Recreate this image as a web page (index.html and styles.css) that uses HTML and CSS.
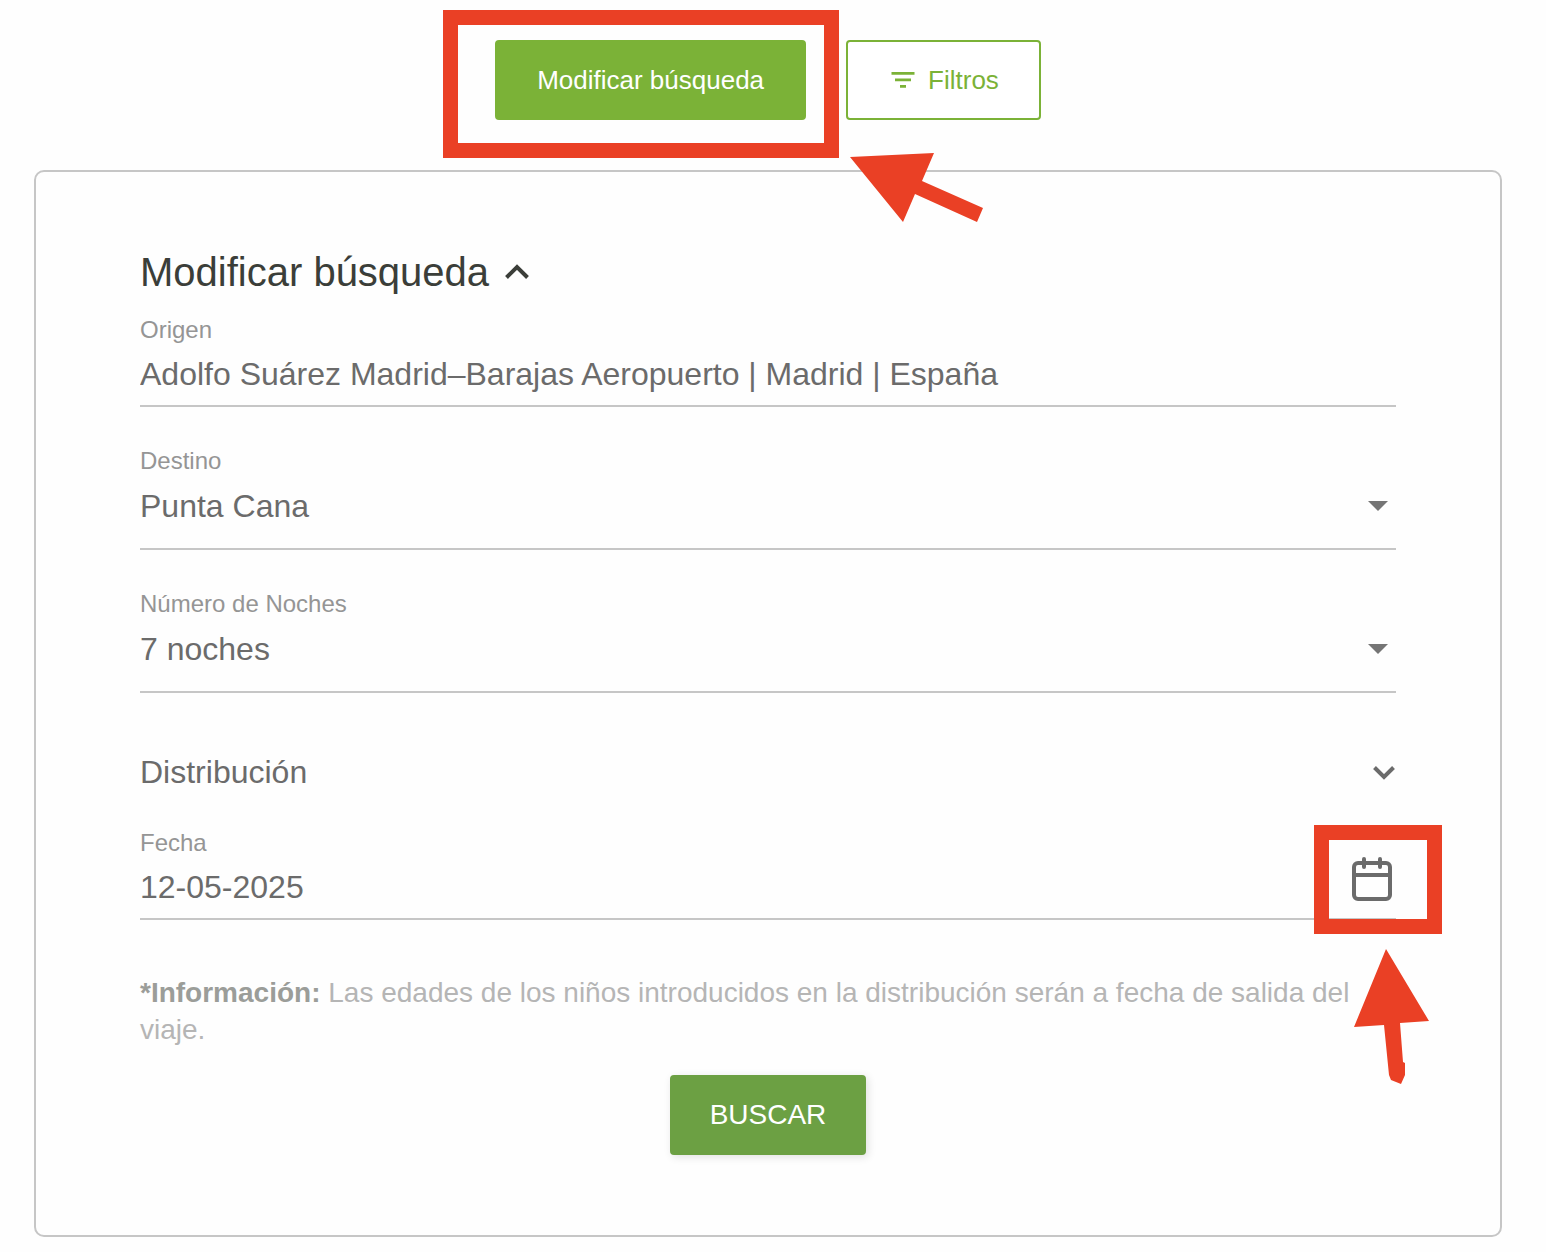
FILE: index.html
```
<!DOCTYPE html>
<html lang="es">

<head>
    <meta charset="UTF-8">
    <meta name="viewport" content="width=device-width, initial-scale=1.0">
    <title>Modificar búsqueda</title>
    <link rel="stylesheet" href="styles.css">
</head>

<body>
    <div class="toolbar">
        <div class="highlighted">
            <button type="button" class="btn btn-primary">Modificar búsqueda</button>
            <div class="mark mark-button"></div>
            <svg class="arrow arrow-button" viewBox="0 0 134 70" aria-hidden="true">
                <path d="M0 4L84 0L72 28L133 55L127 69L65 41L53 69Z" />
            </svg>
        </div>
        <button type="button" class="btn btn-outline">
            <svg width="28" height="28" viewBox="0 0 28 28" fill="currentColor" aria-hidden="true">
                <path d="M3.5 6h23v2.7h-23zM7 12.6h16v2.7H7zM12 19.1h6v2.6h-6z" />
            </svg>
            Filtros
        </button>
    </div>

    <form class="search-card">
        <button type="button" class="title">
            Modificar búsqueda
            <svg width="24" height="16" viewBox="0 0 24 16" aria-hidden="true">
                <path d="M1.5 13.5L12 3L22.5 13.5" fill="none" stroke="currentColor" stroke-width="4" />
            </svg>
        </button>

        <div class="field">
            <label for="origen">Origen</label>
            <input type="text" id="origen" name="origen" value="Adolfo Suárez Madrid–Barajas Aeropuerto | Madrid | España">
        </div>

        <div class="field">
            <label for="destino">Destino</label>
            <div class="control">
                <select id="destino" name="destino">
                    <option>Punta Cana</option>
                </select>
                <svg class="caret" viewBox="0 0 20 10" aria-hidden="true">
                    <path d="M0 0h20L10 10z" />
                </svg>
            </div>
        </div>

        <div class="field">
            <label for="noches">Número de Noches</label>
            <div class="control">
                <select id="noches" name="noches">
                    <option>7 noches</option>
                </select>
                <svg class="caret" viewBox="0 0 20 10" aria-hidden="true">
                    <path d="M0 0h20L10 10z" />
                </svg>
            </div>
        </div>

        <button type="button" class="distribution">
            Distribución
            <svg width="24" height="16" viewBox="0 0 24 16" aria-hidden="true">
                <path d="M2.5 3.5L12 13L21.5 3.5" fill="none" stroke="currentColor" stroke-width="4" />
            </svg>
        </button>

        <div class="field field-date">
            <label for="fecha">Fecha</label>
            <div class="control">
                <input type="text" id="fecha" name="fecha" value="12-05-2025">
                <button type="button" class="calendar" aria-label="Abrir calendario">
                    <svg width="40" height="44" viewBox="0 0 40 44" fill="none" stroke="currentColor" stroke-width="4" aria-hidden="true">
                        <rect x="2" y="6" width="36" height="36" rx="4" />
                        <path d="M2 18h36" />
                        <path d="M12 2v8M28 2v8" stroke-linecap="round" />
                    </svg>
                </button>
                <div class="mark mark-calendar"></div>
                <svg class="arrow arrow-calendar" viewBox="0 0 76 136" aria-hidden="true">
                    <path d="M32 0L75 72L46 74L49 113L51 114L51 126L47 135L37 131L35 126L30 76L0 78Z" />
                </svg>
            </div>
        </div>

        <p class="info"><strong>*Información:</strong> Las edades de los niños introducidos en la distribución serán a fecha de salida del viaje.</p>

        <button type="submit" class="btn btn-submit">BUSCAR</button>
    </form>
</body>

</html>
```

FILE: styles.css
```
* {
    box-sizing: border-box;
}

body {
    margin: 0;
    padding: 40px 44px 15px 34px;
    background-color: #fefefe;
    color: #6b6b6b;
    font-family: "Liberation Sans", Arial, sans-serif;
}

button,
input,
select {
    font-family: inherit;
    color: inherit;
}

button {
    cursor: pointer;
}

/* Top buttons */
.toolbar {
    display: flex;
    justify-content: center;
    gap: 40px;
    margin-bottom: 50px;
}

.highlighted {
    position: relative;
}

.btn {
    display: flex;
    align-items: center;
    justify-content: center;
    gap: 12px;
    height: 80px;
    padding: 0 40px;
    border: 2px solid transparent;
    border-radius: 4px;
    font-size: 26px;
}

.btn-primary {
    background-color: #7bb237;
    border-color: #7bb237;
    color: #ffffff;
}

.btn-outline {
    background-color: #ffffff;
    border-color: #7bb237;
    color: #7bb237;
}

/* Search form */
.search-card {
    padding: 76px 104px 80px;
    border: 2px solid #c6c6c6;
    border-radius: 10px;
}

.title,
.distribution {
    display: flex;
    align-items: center;
    padding: 0;
    border: 0;
    background: none;
    line-height: 48px;
}

.title {
    gap: 16px;
    margin-bottom: 20px;
    color: #3b3e39;
    font-size: 40px;
}

.distribution {
    justify-content: space-between;
    width: 100%;
    margin: 55px 0 33px;
    font-size: 32px;
}

.field {
    margin-bottom: 40px;
}

.field label {
    display: block;
    color: #959595;
    font-size: 24px;
    line-height: 28px;
}

.field input,
.field select {
    display: block;
    width: 100%;
    height: 63px;
    padding: 0;
    border: 0;
    border-bottom: 2px solid #c6c6c6;
    border-radius: 0;
    outline: 0;
    background: none;
    font-size: 32px;
}

.field select {
    appearance: none;
    height: 75px;
    padding-bottom: 12px;
}

.control {
    position: relative;
}

.caret {
    position: absolute;
    top: 26px;
    right: 8px;
    width: 20px;
    height: 10px;
    fill: #757575;
    pointer-events: none;
}

.field-date {
    margin-bottom: 54px;
}

.calendar {
    position: absolute;
    top: 0;
    right: 4px;
    display: flex;
    padding: 0;
    border: 0;
    background: none;
}

.info {
    margin: 0 0 27px;
    color: #b5b5b5;
    font-size: 28px;
    line-height: 37px;
}

.info strong {
    color: #9b9d99;
}

.btn-submit {
    margin: 0 auto;
    padding: 0 38px;
    background-color: #6ca043;
    border-color: #6ca043;
    box-shadow: 2px 2px 8px rgba(0, 0, 0, 0.12);
    color: #ffffff;
    font-size: 28px;
}

/* Red marks drawn over the page */
.mark,
.arrow {
    position: absolute;
    z-index: 1;
    pointer-events: none;
}

.mark {
    border: 15px solid #ea4025;
}

.arrow {
    fill: #ea4025;
}

.mark-button {
    top: -30px;
    left: -52px;
    width: 396px;
    height: 148px;
}

.arrow-button {
    top: 113px;
    left: 355px;
    width: 134px;
    height: 70px;
}

.mark-calendar {
    top: -32px;
    right: -46px;
    width: 128px;
    height: 109px;
}

.arrow-calendar {
    top: 92px;
    right: -34px;
    width: 76px;
    height: 136px;
}
```
